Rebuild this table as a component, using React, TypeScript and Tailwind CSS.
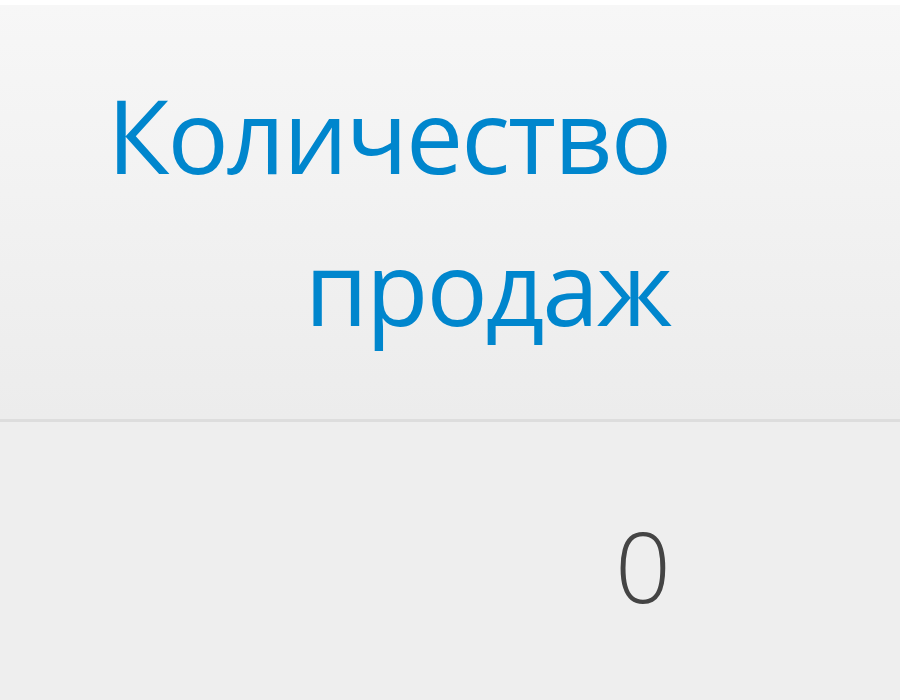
export default function App() {
  return (
    <div className="h-[700px] w-[900px] overflow-hidden bg-white pt-[5px] font-['Open_Sans',sans-serif]">
      <div className="flex justify-end border-b-[3px] border-[#dddddd] bg-gradient-to-b from-[#f7f7f7] to-[#ececec] pb-[56px] pr-[230px] pt-[54px]">
        <div className="w-[600px] text-right text-[102px] leading-[152px] tracking-[-2px] text-[#0086cd]">
          Количество продаж
        </div>
      </div>
      <div className="flex h-full justify-end bg-[#eeeeee] pr-[229px] pt-[73px]">
        <span className="text-[98px] font-light leading-[140px] text-[#444444]">0</span>
      </div>
    </div>
  );
}
